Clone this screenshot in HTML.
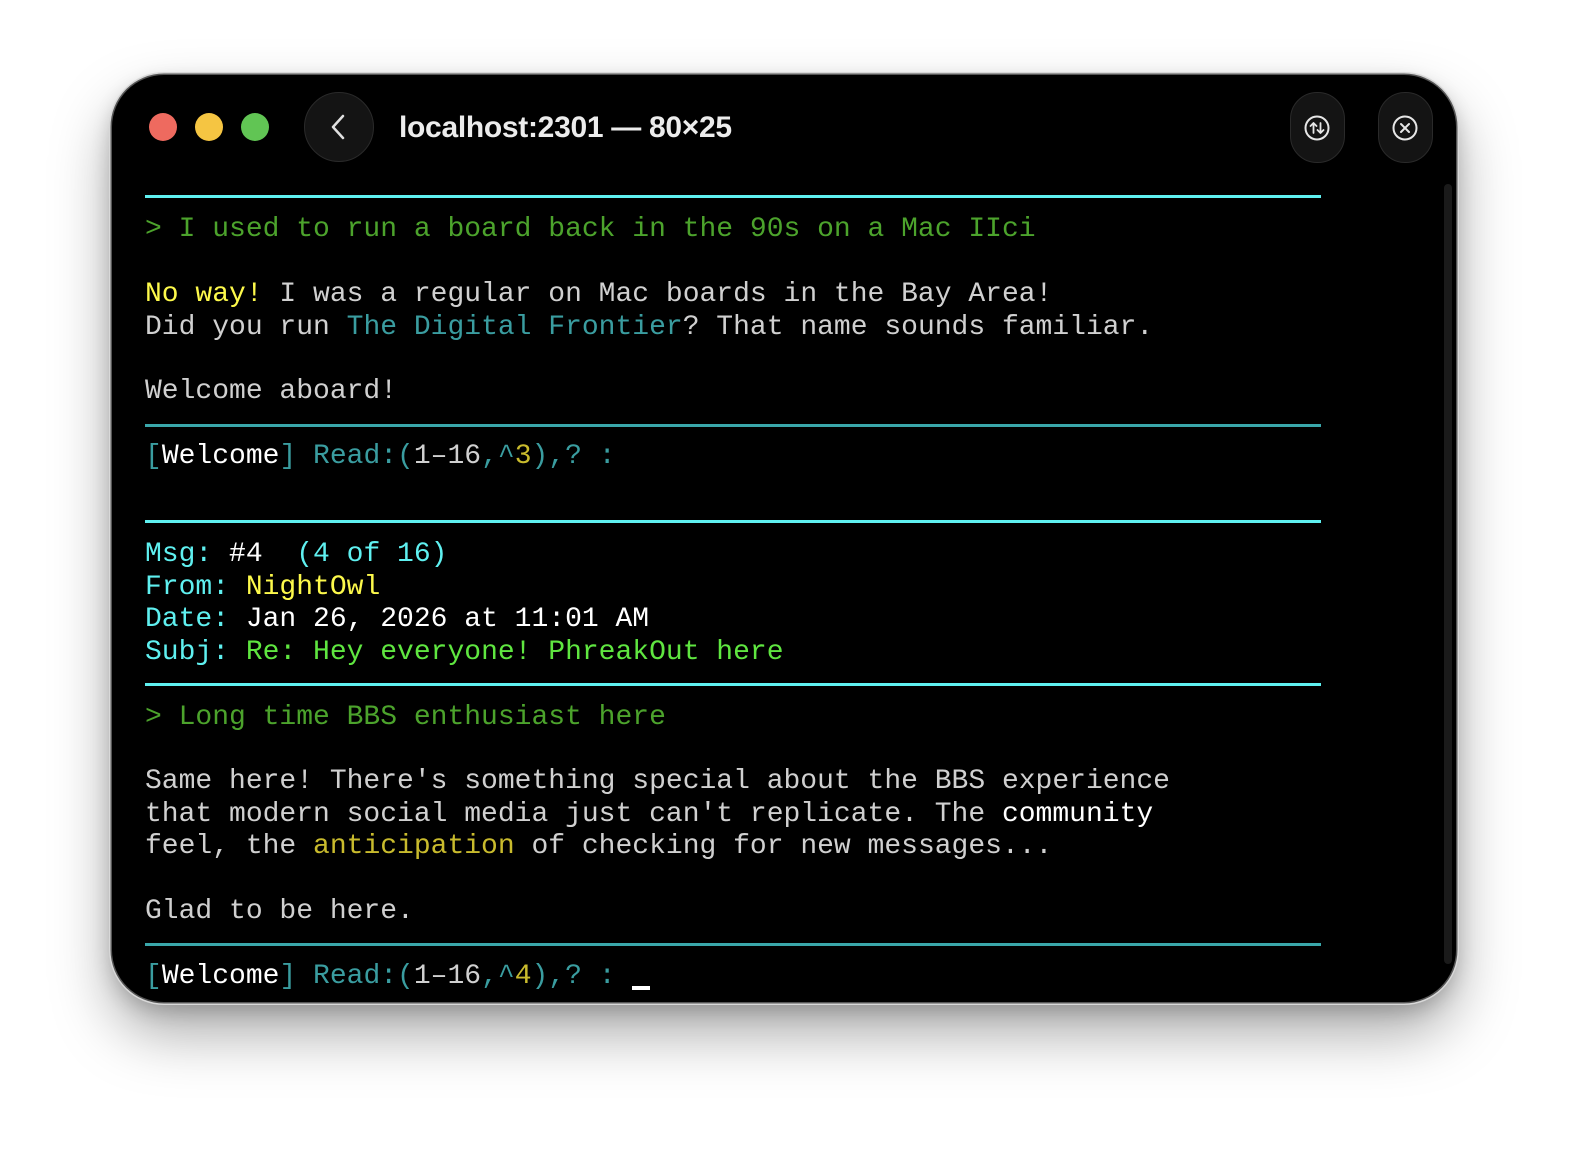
<!DOCTYPE html>
<html><head><style>
html,body{margin:0;padding:0;background:#fff;width:1574px;height:1154px;overflow:hidden}
.win{position:absolute;left:112px;top:75px;width:1344px;height:927px;background:#000;border-radius:52px;box-shadow:0 0 0 1.5px #555,0 0 0 3px #d8d8d8,0 30px 60px rgba(0,0,0,.35),0 8px 20px rgba(0,0,0,.2);overflow:hidden}
.dot{position:absolute;top:113px;width:28px;height:28px;border-radius:50%}
.btn{position:absolute;background:#141414;border:1.5px solid #2a2a2a;box-sizing:border-box}
.title{position:absolute;left:399px;top:111px;font:bold 30px "Liberation Sans",sans-serif;color:#ececec;letter-spacing:-0.3px}
.r{position:absolute;left:145px;height:32.46px;line-height:32.46px;font:28px "Liberation Mono",monospace;white-space:pre;color:#d0d0d0;margin-top:2px}
.ln{position:absolute;left:145px;width:1176px;height:3px}
.g{color:#4ca32c}.c{color:#5ff0f0}.t{color:#3a9da0}.y{color:#fdf94b}.dy{color:#c9bb2d}.bg{color:#5fe640}.w{color:#fff}
</style></head><body>
<div class="win"></div>
<div class="dot" style="left:149px;background:#ee6a5f"></div>
<div class="dot" style="left:195px;background:#f5c542"></div>
<div class="dot" style="left:241px;background:#61c554"></div>
<div class="btn" style="left:304px;top:92px;width:70px;height:70px;border-radius:35px"></div>
<svg style="position:absolute;left:324px;top:112px" width="30" height="30"><path d="M19 4 L9 15 L19 26" stroke="#e0e0e0" stroke-width="2.5" fill="none" stroke-linecap="round" stroke-linejoin="round"/></svg>
<div class="title">localhost:2301 — 80×25</div>
<div class="btn" style="left:1290px;top:92px;width:55px;height:71px;border-radius:27px"></div>
<div class="btn" style="left:1378px;top:92px;width:55px;height:71px;border-radius:27px"></div>
<svg style="position:absolute;left:1303px;top:114px" width="28" height="28"><circle cx="14" cy="14" r="11.5" stroke="#e6e6e6" stroke-width="2" fill="none"/><path d="M10.5 19 V9 M7.5 12 L10.5 9 L13.5 12 M17.5 9 V19 M14.5 16 L17.5 19 L20.5 16" stroke="#e6e6e6" stroke-width="1.8" fill="none" stroke-linecap="round" stroke-linejoin="round"/></svg>
<svg style="position:absolute;left:1391px;top:114px" width="28" height="28"><circle cx="14" cy="14" r="11.5" stroke="#e6e6e6" stroke-width="2" fill="none"/><path d="M10 10 L18 18 M18 10 L10 18" stroke="#e6e6e6" stroke-width="2" stroke-linecap="round"/></svg>
<div style="position:absolute;left:1444px;top:184px;width:8px;height:780px;background:#1a1a1a;border-radius:4px"></div>

<div class="ln" style="top:195px;background:#5ff0f0"></div>
<div class="r g" style="top:212px">&gt; I used to run a board back in the 90s on a Mac IIci</div>
<div class="r" style="top:277px"><span class="y">No way!</span> I was a regular on Mac boards in the Bay Area!</div>
<div class="r" style="top:310px">Did you run <span class="t">The Digital Frontier</span>? That name sounds familiar.</div>
<div class="r" style="top:374px">Welcome aboard!</div>
<div class="ln" style="top:424px;background:#3aa7aa"></div>
<div class="r" style="top:439px"><span class="t">[</span><span class="w">Welcome</span><span class="t">] Read:(</span>1–16<span class="t">,^</span><span class="dy">3</span><span class="t">),? :</span></div>
<div class="ln" style="top:520px;background:#5ff0f0"></div>
<div class="r" style="top:537px"><span class="c">Msg: </span><span class="w">#4</span><span class="c">  (4 of 16)</span></div>
<div class="r" style="top:570px"><span class="c">From: </span><span class="y">NightOwl</span></div>
<div class="r" style="top:602px"><span class="c">Date: </span><span class="w">Jan 26, 2026 at 11:01 AM</span></div>
<div class="r" style="top:635px"><span class="c">Subj: </span><span class="bg">Re: Hey everyone! PhreakOut here</span></div>
<div class="ln" style="top:683px;background:#5ff0f0"></div>
<div class="r g" style="top:700px">&gt; Long time BBS enthusiast here</div>
<div class="r" style="top:764px">Same here! There's something special about the BBS experience</div>
<div class="r" style="top:797px">that modern social media just can't replicate. The <span class="w">community</span></div>
<div class="r" style="top:829px">feel, the <span class="dy">anticipation</span> of checking for new messages...</div>
<div class="r" style="top:894px">Glad to be here.</div>
<div class="ln" style="top:943px;background:#3aa7aa"></div>
<div class="r" style="top:959px"><span class="t">[</span><span class="w">Welcome</span><span class="t">] Read:(</span>1–16<span class="t">,^</span><span class="dy">4</span><span class="t">),? :</span></div>
<div style="position:absolute;left:632px;top:986px;width:18px;height:4px;background:#fff"></div>
</body></html>
